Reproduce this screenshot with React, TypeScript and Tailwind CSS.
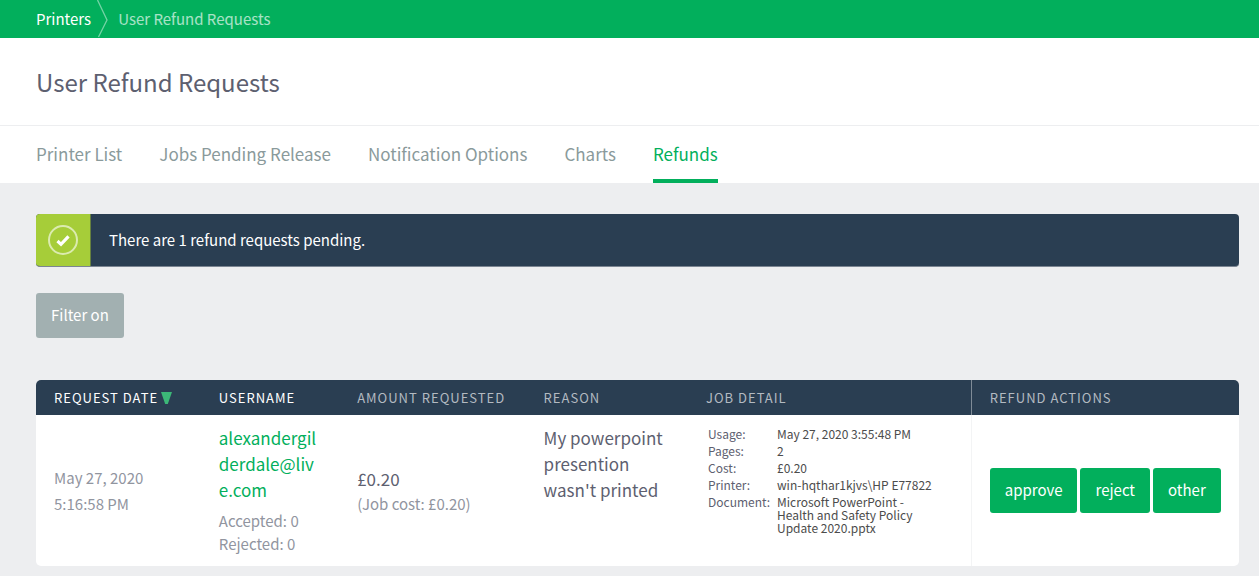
const tabs = ['Printer List', 'Jobs Pending Release', 'Notification Options', 'Charts', 'Refunds'];

const columns = [
  { label: 'Request Date', width: 'w-[13.7%]', sortable: true, sorted: true },
  { label: 'Username', width: 'w-[11.5%]', sortable: true },
  { label: 'Amount Requested', width: 'w-[15.5%]' },
  { label: 'Reason', width: 'w-[13.5%]' },
  { label: 'Job Detail', width: 'w-[23.5%]' },
  { label: 'Refund Actions', width: 'w-[22.3%]', divider: true },
];

const jobDetail = [
  ['Usage:', 'May 27, 2020 3:55:48 PM'],
  ['Pages:', '2'],
  ['Cost:', '£0.20'],
  ['Printer:', 'win-hqthar1kjvs\\HP E77822'],
  ['Document:', 'Microsoft PowerPoint - Health and Safety Policy Update 2020.pptx'],
];

const actions = ['approve', 'reject', 'other'];

function Breadcrumbs() {
  return (
    <nav aria-label="Breadcrumb" className="flex h-[38px] items-center bg-[#02af5c] px-9 text-[15px] text-white">
      <a href="#printers">Printers</a>
      <svg className="ml-[6px] h-[38px] w-[11px]" viewBox="0 0 11 38" fill="none" stroke="#fff" strokeOpacity="0.45" strokeWidth="1.3">
        <path d="M0.5 0L10 20L1.5 37" />
      </svg>
      <span className="ml-[10px] text-white/65">User Refund Requests</span>
    </nav>
  );
}

function Tabs() {
  return (
    <nav className="flex h-[57px] gap-[37px] bg-white px-9 text-[17px]">
      {tabs.map((tab) => (
        <a
          key={tab}
          href="#"
          className={
            tab === 'Refunds'
              ? 'flex items-center border-b-4 border-[#02af5c] pt-[2px] text-[#02af5c]'
              : 'flex items-center border-b-4 border-transparent pt-[2px] text-[#8a9a9b]'
          }
        >
          {tab}
        </a>
      ))}
    </nav>
  );
}

function Notice() {
  return (
    <div role="status" className="flex h-[53px] overflow-hidden rounded border-b border-[#7b8592] bg-[#2a3e52]">
      <div className="flex w-[55px] items-center justify-center border-r border-[#66803f] bg-[#a6cd39]">
        <svg className="h-8 w-8" viewBox="0 0 32 32" fill="none">
          <circle cx="16" cy="16" r="14" stroke="#fff" strokeOpacity="0.6" strokeWidth="2" />
          <path d="M10.5 17L14 20.3L21.5 12.3" stroke="#fff" strokeWidth="3.2" />
        </svg>
      </div>
      <p className="flex items-center pl-[18px] text-[15px] text-white">There are 1 refund requests pending.</p>
    </div>
  );
}

function RefundTable() {
  return (
    <table className="mt-[42px] w-full table-fixed border-separate border-spacing-0 overflow-hidden rounded-[5px] bg-white text-left text-[#5d6070]">
      <thead className="bg-[#2a3e52] text-[13px] tracking-[1px] uppercase">
        <tr className="h-[35px]">
          {columns.map((col) => (
            <th
              key={col.label}
              scope="col"
              className={`${col.width} px-[18px] font-normal whitespace-nowrap ${col.sortable ? 'text-white' : 'text-[#b3bac1]'} ${col.divider ? 'border-l border-[#7f8b97]' : ''}`}
            >
              {col.sortable ? <a href="#">{col.label}</a> : col.label}
              {col.sorted && (
                <svg className="ml-[3px] inline h-3 w-[11px] align-[-1px]" viewBox="0 0 11 12" fill="#3cb878">
                  <path d="M0 0H11L6.8 12H4.2Z" />
                </svg>
              )}
            </th>
          ))}
        </tr>
      </thead>
      <tbody>
        <tr>
          <td className="px-[18px] text-[15px] leading-[26px] text-[#91959f]">
            May 27, 2020
            <br />
            5:16:58 PM
          </td>
          <td className="px-[18px] pt-[10px] pb-[11px]">
            <a href="#" className="block text-[17px] leading-[26px] break-all text-[#02af5c]">
              alexandergilderdale@live.com
            </a>
            <div className="mt-[6px] text-[15px] leading-[23px] whitespace-nowrap text-[#91959f]">
              <p>Accepted: 0</p>
              <p>Rejected: 0</p>
            </div>
          </td>
          <td className="px-[18px]">
            <p className="text-[17px] leading-[26px]">£0.20</p>
            <p className="text-[15px] leading-[23px] text-[#91959f]">(Job cost: £0.20)</p>
          </td>
          <td className="px-[18px] pt-[10px] align-top text-[17px] leading-[26px]">My powerpoint presention wasn't printed</td>
          <td className="px-[18px] pt-[10px] align-top">
            <table className="ml-[2px] text-[12px] leading-[13px]">
              <tbody>
                {jobDetail.map(([name, value]) => (
                  <tr key={name}>
                    <th scope="row" className="w-[69px] py-[2px] align-top font-normal whitespace-nowrap">
                      {name}
                    </th>
                    <td className="max-w-[162px] py-[2px] align-top text-[#4c4c4c]">{value}</td>
                  </tr>
                ))}
              </tbody>
            </table>
          </td>
          <td className="border-l border-[#f3f4f5] px-[18px]">
            <div className="flex gap-[3px]">
              {actions.map((action) => (
                <button key={action} type="button" className="h-[45px] rounded-[3px] bg-[#02af5c] px-[15px] text-[15px] text-white">
                  {action}
                </button>
              ))}
            </div>
          </td>
        </tr>
      </tbody>
    </table>
  );
}

export default function App() {
  return (
    <div className="min-h-screen bg-[#edeef0] font-['Noto_Sans_CJK_SC',sans-serif]">
      <Breadcrumbs />
      <header className="flex h-[88px] items-center border-b border-[#edeef0] bg-white px-9">
        <h1 className="text-[24px] text-[#5d6070]">User Refund Requests</h1>
      </header>
      <Tabs />
      <main className="pt-[31px] pr-5 pb-[10px] pl-9">
        <Notice />
        <button type="button" className="mt-[26px] block h-[45px] rounded-[3px] bg-[#a2b0b1] px-[15px] text-[15px] text-white">
          Filter on
        </button>
        <RefundTable />
      </main>
    </div>
  );
}
